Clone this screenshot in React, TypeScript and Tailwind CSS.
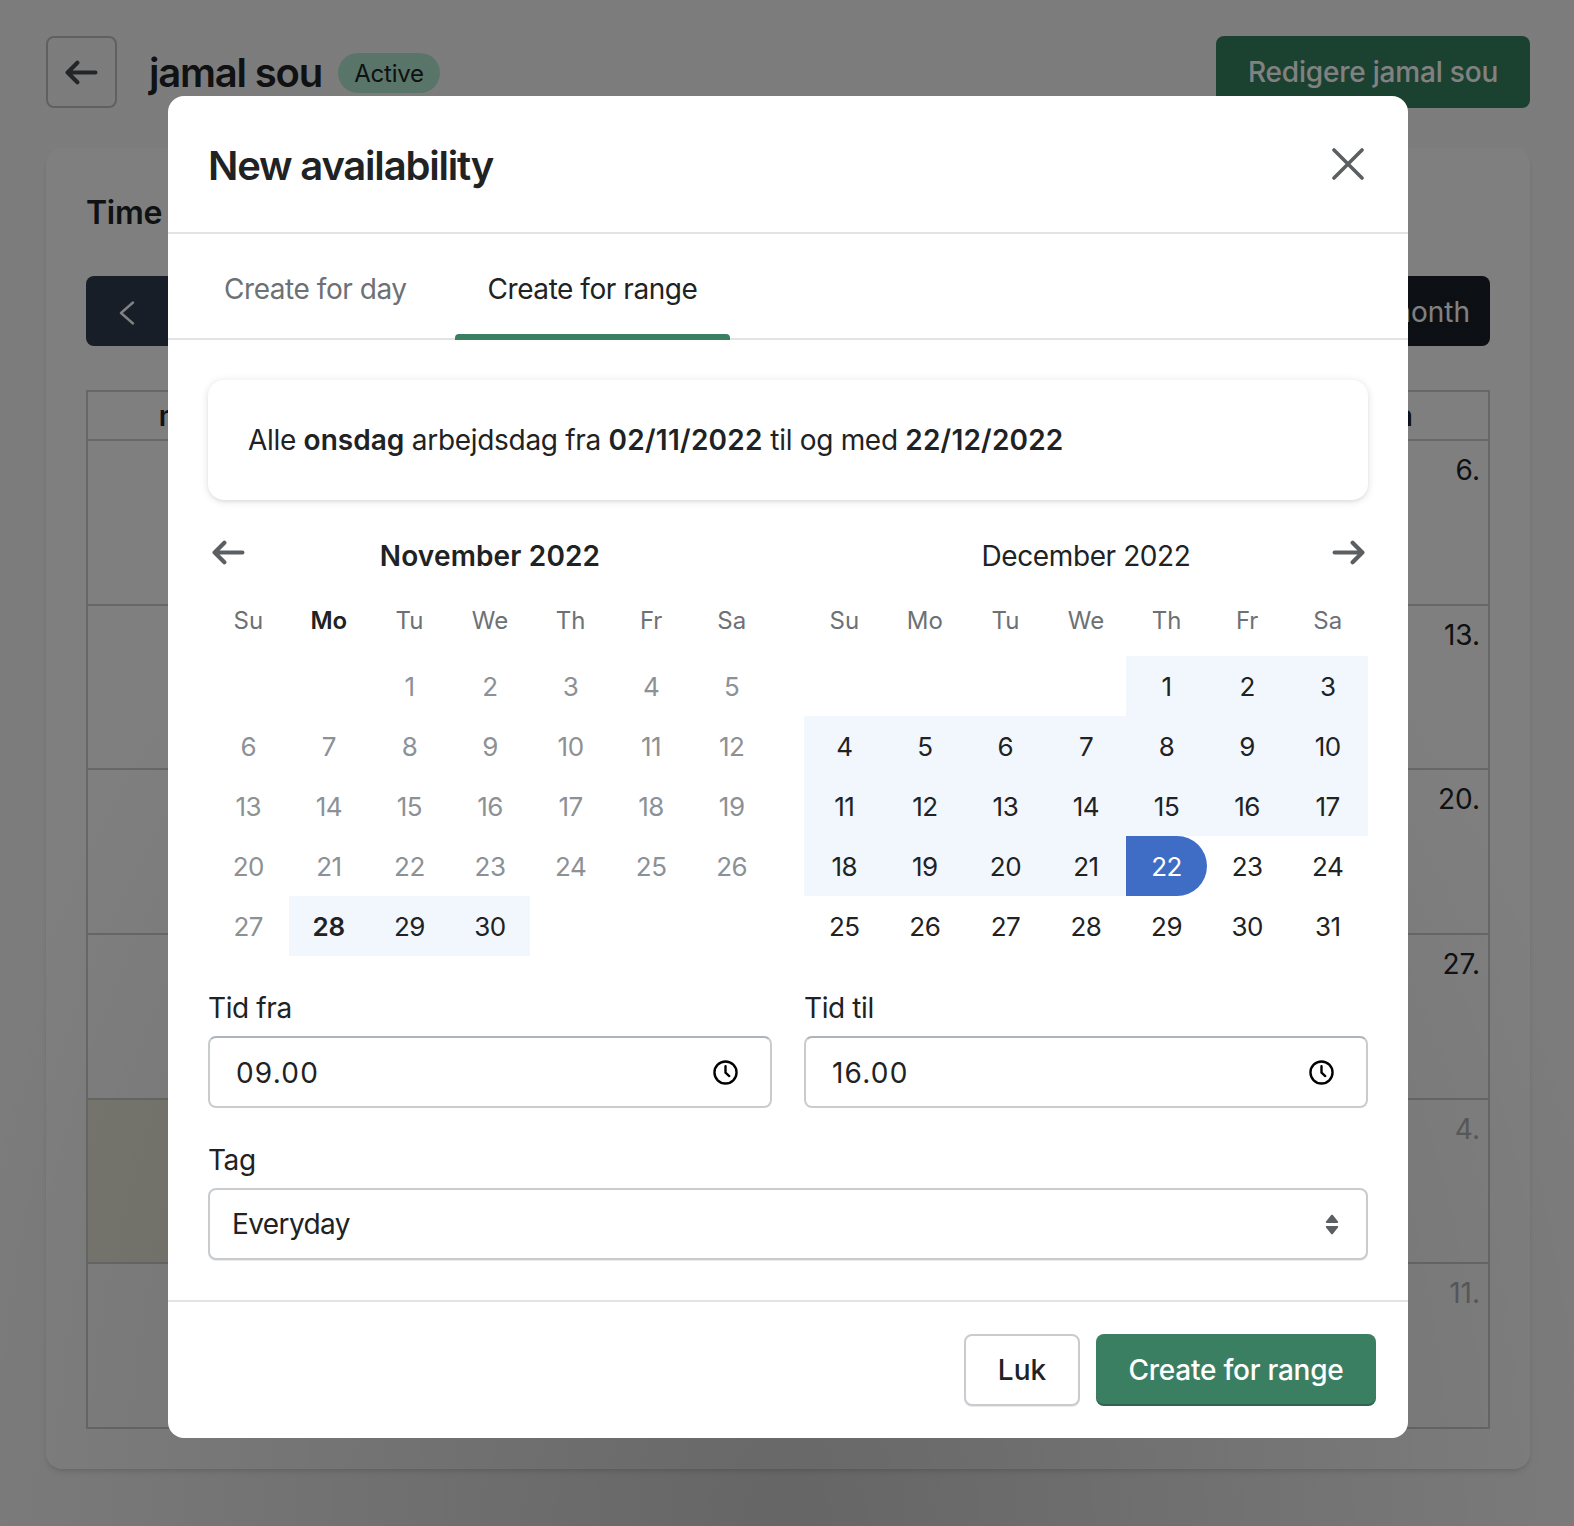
import React from "react";

const weekDays = ["Su", "Mo", "Tu", "We", "Th", "Fr", "Sa"];

const ArrowIcon = ({ flip = false, className = "" }: { flip?: boolean; className?: string }) => (
  <svg
    viewBox="0 0 32 24"
    fill="none"
    stroke="currentColor"
    strokeWidth="4"
    strokeLinecap="round"
    strokeLinejoin="round"
    className={`${flip ? "-scale-x-100" : ""} ${className}`}
  >
    <path d="M2.5 12h27M12 2.5 2.5 12l9.5 9.5" />
  </svg>
);

const ClockIcon = () => (
  <svg viewBox="0 0 24 24" fill="none" stroke="#000" strokeWidth="2.3" strokeLinecap="round" strokeLinejoin="round" className="w-[25px] h-[25px]">
    <circle cx="12" cy="12" r="10.6" />
    <path d="M12 6v6.2l3.6 3.2" />
  </svg>
);

const SortIcon = () => (
  <svg viewBox="0 0 14 21" className="w-[14px] h-[21px]" fill="#5c5f62">
    <path d="M6.2 1 1 7.6c-.5.7 0 1.4.8 1.4h10.4c.8 0 1.3-.7.8-1.4L7.8 1c-.4-.5-1.2-.5-1.6 0z" />
    <path d="M6.2 20 1 13.4c-.5-.7 0-1.4.8-1.4h10.4c.8 0 1.3.7.8 1.4L7.8 20c-.4.5-1.2.5-1.6 0z" />
  </svg>
);

type MonthProps = {
  title: string;
  blanks: number;
  days: number;
  inRange: (d: number) => boolean;
  rangeEnd?: number;
  rangeStart?: number;
  disabledBefore?: number;
  boldTitle?: boolean;
  boldWeekday?: string;
  left?: boolean;
};

const Month = ({ title, blanks, days, inRange, rangeEnd, rangeStart, disabledBefore = 0, boldTitle, boldWeekday, left }: MonthProps) => (
  <div>
    <div className="grid grid-cols-[48px_1fr_48px] h-[48px] items-center">
      <div className="text-[#5c5f62] -mt-2">
        {left && <ArrowIcon className="w-[33px] h-[25px] ml-[4px]" />}
      </div>
      <div className={`text-center text-[28px] text-[#202223] ${boldTitle ? "font-semibold tracking-[0.15px]" : "tracking-[-0.4px]"}`}>{title}</div>
      <div className="text-[#5c5f62] -mt-2">
        {!left && <ArrowIcon flip className="w-[33px] h-[25px] ml-[12px]" />}
      </div>
    </div>
    <div className="grid grid-cols-7 mt-[11px] mb-[5px]">
      {weekDays.map((w) => (
        <div
          key={w}
          className={`h-[60px] flex items-center justify-center text-[24px] ${boldTitle && w === boldWeekday ? "font-semibold text-[#202223]" : "text-[#6d7175]"}`}
        >
          {w}
        </div>
      ))}
    </div>
    <div className="grid grid-cols-7">
      {Array.from({ length: blanks }).map((_, i) => (
        <div key={i} className="h-[60px]" />
      ))}
      {Array.from({ length: days }).map((_, i) => {
        const d = i + 1;
        const isEnd = d === rangeEnd;
        const disabled = d < disabledBefore;
        return (
          <div
            key={d}
            className={`h-[60px] flex items-center justify-center text-[26px] tracking-[-0.5px] ${
              isEnd
                ? "bg-[#3f6dc5] text-white rounded-r-full"
                : inRange(d)
                ? "bg-[#f2f6fd] text-[#202223]"
                : disabled
                ? "text-[#8c9196]"
                : "text-[#202223]"
            } ${d === rangeStart ? "font-semibold tracking-normal" : ""}`}
          >
            {d}
          </div>
        );
      })}
    </div>
  </div>
);

const Field = ({ label, children }: { label: string; children: React.ReactNode }) => (
  <div>
    <div className="text-[28px] leading-[40px] tracking-[-0.4px] text-[#202223] mb-[8px]">{label}</div>
    {children}
  </div>
);

const TimeInput = ({ value }: { value: string }) => (
  <div className="h-[72px] bg-white rounded-lg border-2 border-[#c9cccf] border-t-[#aeb4b9] flex items-center justify-between pl-[26px] pr-[32px]">
    <span className="text-[28px] tracking-[1.2px] text-[#202223] pt-[2px]">{value}</span>
    <ClockIcon />
  </div>
);

const weekRows = [
  { top: "6.", muted: false },
  { top: "13.", muted: false },
  { top: "20.", muted: false },
  { top: "27.", muted: false },
  { top: "4.", muted: true, tint: true },
  { top: "11.", muted: true },
];

const Background = () => (
  <div className="pl-[46px] pr-[44px] pt-[36px] pb-[56px] bg-[#f6f6f7] min-h-[1526px]">
    <div className="flex items-center">
      <div className="w-[71px] h-[72px] rounded-lg border-2 border-[#babfc3] bg-[#f6f6f7] flex items-center justify-center text-[#45494d]">
        <ArrowIcon className="w-[33px] h-[25px]" />
      </div>
      <h1 className="ml-[32px] text-[40px] font-semibold tracking-[-1.2px] text-[#202223] pt-[2px]">jamal sou</h1>
      <span className="ml-[16px] mt-[2px] pt-[2px] h-[40px] w-[102px] justify-center rounded-full bg-[#b0e8cf] text-[24px] tracking-[-0.2px] flex items-center text-[#202223]">Active</span>
      <button className="ml-auto w-[314px] h-[72px] rounded-lg bg-[#368060] text-white text-[28px] tracking-[-0.2px] font-medium">Redigere jamal sou</button>
    </div>
    <div className="mt-[40px] h-[1321px] bg-[#fbfbfb] rounded-2xl shadow-md px-[40px] pt-[40px]">
      <h2 className="text-[32px] leading-[50px] font-semibold tracking-[-0.3px] text-[#202223]">Time</h2>
      <div className="mt-[38px] h-[70px] flex justify-between">
        <div className="w-[120px] rounded-lg bg-[#303c50] flex items-center pl-[33px] pt-[4px]">
          <svg viewBox="0 0 16 24" fill="none" stroke="#fff" strokeWidth="2.4" className="w-[16px] h-[24px]" strokeLinecap="round" strokeLinejoin="round">
            <path d="M14 1.5 2 12l12 10.5" />
          </svg>
        </div>
        <div className="w-[200px] rounded-lg bg-[#182028] flex items-center justify-end pr-[20px] pt-[2px] text-white text-[28px]">month</div>
      </div>
      <div className="mt-[44px] border-2 border-[#c9cccf] h-[1039px]">
        <div className="grid grid-cols-7 h-[49px] border-b-2 border-[#c9cccf] text-[28px] font-semibold text-[#202223]">
          {["man", "", "", "", "", "", "søn"].map((d, i) => (
            <div key={i} className="flex items-center justify-center">{d}</div>
          ))}
        </div>
        {weekRows.map((row) => (
          <div key={row.top} className="grid grid-cols-7 h-[164.7px] border-b-2 border-[#c9cccf] last:border-b-0">
            {[0, 1, 2, 3, 4, 5, 6].map((c) => (
              <div key={c} className={`${row.tint && c === 0 ? "bg-[#eceada]" : ""}`}>
                {c === 6 && (
                  <div className={`text-right pr-[8px] pt-[8px] text-[28px] ${row.muted ? "text-[#aeb1b4]" : "text-[#202223]"}`}>{row.top}</div>
                )}
              </div>
            ))}
          </div>
        ))}
      </div>
    </div>
  </div>
);

const App = () => {
  return (
    <div className="relative w-[1574px] h-[1526px] overflow-hidden font-['Inter',sans-serif]">
      <Background />
      <div className="absolute inset-0 bg-[radial-gradient(ellipse_55%_80%_at_50%_100%,rgba(0,0,0,0.59),rgba(0,0,0,0.495))] flex justify-center items-start pt-[96px] pl-[2px]">
        <div className="w-[1240px] h-[1342px] bg-white rounded-[16px]">
          <div className="h-[138px] border-b-2 border-[#e1e3e5] flex items-center justify-between pl-[40px] pr-[44px]">
            <h2 className="text-[40px] font-semibold tracking-[-1.2px] text-[#202223] mt-[3px]">New availability</h2>
            <svg viewBox="0 0 32 32" fill="none" stroke="#5c5f62" strokeWidth="3.6" strokeLinecap="round" className="w-[32px] h-[32px]">
              <path d="M2 2l28 28M30 2 2 30" />
            </svg>
          </div>
          <div className="h-[106px] border-b-2 border-[#e1e3e5] flex pl-[23px] gap-[15px] text-[28px] tracking-[-0.45px]">
            <div className="h-[106px] px-[33px] pt-[3px] flex items-center text-[#6d7175]">Create for day</div>
            <div className="relative h-[106px] px-[33px] pt-[3px] flex items-center text-[#202223]">
              Create for range
              <span className="absolute left-0 right-0 bottom-0 h-[6px] rounded-t-[4px] bg-[#3b7f63]" />
            </div>
          </div>
          <div className="px-[40px] pt-[40px]">
            <div className="h-[120px] rounded-2xl bg-white shadow-[0_1px_8px_rgba(23,24,24,0.12),0_2px_3px_rgba(0,0,0,0.06)] flex items-center px-[40px] text-[28px] tracking-[-0.3px] text-[#202223]">
              <p>
                Alle <b className="font-semibold tracking-normal">onsdag</b> arbejdsdag fra <b className="font-semibold tracking-[0.25px]">02/11/2022</b> til og med <b className="font-semibold tracking-[0.2px]">22/12/2022</b>
              </p>
            </div>
            <div className="mt-[32px] grid grid-cols-2 gap-x-[32px]">
              <Month
                left
                boldTitle
                boldWeekday="Mo"
                title="November 2022"
                blanks={2}
                days={30}
                disabledBefore={28}
                rangeStart={28}
                inRange={(d) => d >= 28}
              />
              <Month title="December 2022" blanks={4} days={31} rangeEnd={22} inRange={(d) => d < 22} />
            </div>
            <div className="mt-[32px] grid grid-cols-2 gap-x-[32px]">
              <Field label="Tid fra"><TimeInput value="09.00" /></Field>
              <Field label="Tid til"><TimeInput value="16.00" /></Field>
            </div>
            <div className="mt-[32px]">
              <Field label="Tag">
                <div className="h-[72px] bg-white rounded-lg border-2 border-[#c9cccf] shadow-[0_1px_0_rgba(0,0,0,0.08)] flex items-center justify-between pl-[22px] pr-[27px]">
                  <span className="text-[28px] tracking-[-0.6px] text-[#202223]">Everyday</span>
                  <SortIcon />
                </div>
              </Field>
            </div>
          </div>
          <div className="mt-[40px] border-t-2 border-[#e1e3e5] pt-[32px] pr-[32px] flex justify-end gap-[16px]">
            <button className="w-[116px] h-[72px] rounded-lg bg-white border-2 border-[#c9cccf] shadow-[0_1px_0_rgba(0,0,0,0.08)] text-[28px] font-medium text-[#202223]">Luk</button>
            <button className="w-[280px] h-[72px] rounded-lg bg-[#3b7f63] shadow-[inset_0_-2px_0_rgba(0,0,0,0.2)] text-[28px] tracking-[-0.25px] font-medium text-white">Create for range</button>
          </div>
        </div>
      </div>
    </div>
  );
};

export default App;
